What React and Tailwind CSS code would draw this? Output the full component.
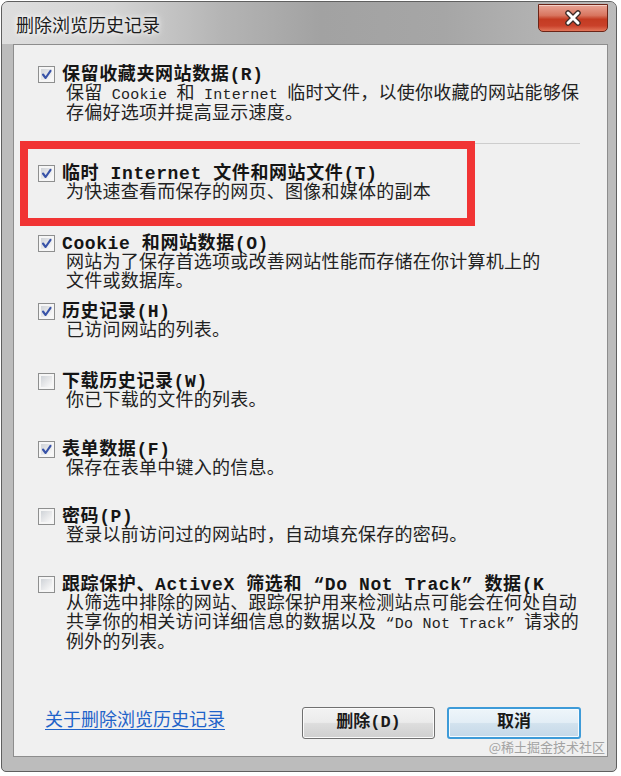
import React from "react";

const FONT = { fontFamily: '"Liberation Mono","Noto Sans CJK SC",monospace' };

function Check({ checked }) {
  return (
    <div className="w-[17px] h-[17px] shrink-0 mt-[1px] border border-[#8e8f8f] bg-[#f6f6f6] p-[2px]">
      <div className="w-full h-full relative bg-[linear-gradient(135deg,#cfd3d8_0%,#e6e7e9_50%,#fbfbfb_100%)]">
        {checked && (
          <svg width="15" height="15" viewBox="0 0 15 15" className="absolute -left-[2px] -top-[2px]">
            <path d="M4 7.5 L6.6 11 L11.5 3.8" fill="none" stroke="#3853a8" strokeWidth="2.1" strokeLinecap="round" strokeLinejoin="round" />
          </svg>
        )}
      </div>
    </div>
  );
}

function L({ children }) {
  return <span className="text-[15px]">{children}</span>;
}

function Item({ checked, title, lines }) {
  return (
    <div className="flex pl-[24px]">
      <Check checked={checked} />
      <div className="ml-[7px] text-[#151515]">
        <div className="text-[18px] leading-[20px] font-bold tracking-[0.6px] whitespace-nowrap">{title}</div>
        <div className="pl-[4px] text-[18px] leading-[19px] tracking-[0.25px] text-[#222222]">
          {lines.map((ln, i) => (
            <div key={i} className="whitespace-nowrap">{ln}</div>
          ))}
        </div>
      </div>
    </div>
  );
}

export default function App() {
  return (
    <div className="w-[621px] h-[776px] bg-white relative overflow-hidden" style={FONT}>
      <div className="ml-[1px] mt-[1px] w-[616px] h-[771px] rounded-t-[7px] rounded-b-[5px] border border-[#5f5f5f] bg-[#bcbcbc] flex flex-col">
        {/* title bar */}
        <div className="h-[42px] shrink-0 rounded-t-[6px] flex justify-between pl-[14px] pr-[8px] bg-[linear-gradient(90deg,#dedede_0%,#d4d4d4_18%,#b4b4b4_36%,#a2a2a2_52%,#a6a6a6_72%,#bcbcbc_100%)]">
          <div className="self-center mt-[2px] text-[18px] leading-[22px] text-[#1c1c1c] [text-shadow:0_0_8px_#ffffff,0_0_4px_#ffffff]" style={{ fontFamily: '"Noto Sans CJK SC",sans-serif' }}>
            删除浏览历史记录
          </div>
          <div className="mt-[2px] w-[70px] h-[28px] rounded-b-[5px] border border-[#6b2417] bg-[linear-gradient(180deg,#e9a596_0%,#d8755f_40%,#c43b22_55%,#c9412a_80%,#e3765a_100%)] flex items-center justify-center shadow-[inset_0_1px_0_rgba(255,255,255,0.5)]">
            <svg width="20" height="18" viewBox="0 0 20 18">
              <path d="M5 4 L15 14 M15 4 L5 14" stroke="#3d2a26" strokeWidth="5.5" strokeLinecap="round" />
              <path d="M5 4 L15 14 M15 4 L5 14" stroke="#ffffff" strokeWidth="3" strokeLinecap="round" />
            </svg>
          </div>
        </div>
        {/* body */}
        <div className="flex-1 pl-[11px] pr-[8px] pb-[14px]">
          <div className="h-full border border-[#8d8d8d] bg-[#f0f0f0] flex flex-col pt-[20px] pb-[17px]">
            <Item
              checked
              title="保留收藏夹网站数据(R)"
              lines={[
                <>保留<L> Cookie </L>和<L> Internet </L>临时文件，以使你收藏的网站能够保</>,
                "存偏好选项并提高显示速度。",
              ]}
            />
            <div className="mt-[19px] ml-[16px] mr-[27px] h-px bg-[#cdcdcd]" />
            <div className="relative mt-[20px]">
              <Item
                checked
                title="临时 Internet 文件和网站文件(T)"
                lines={["为快速查看而保存的网页、图像和媒体的副本"]}
              />
              <div className="absolute left-[6px] -top-[23px] w-[455px] h-[85px] border-[8px] border-[#f13434] pointer-events-none" />
            </div>
            <div className="mt-[31px]">
              <Item
                checked
                title="Cookie 和网站数据(O)"
                lines={["网站为了保存首选项或改善网站性能而存储在你计算机上的", "文件或数据库。"]}
              />
            </div>
            <div className="mt-[10px]">
              <Item checked title="历史记录(H)" lines={["已访问网站的列表。"]} />
            </div>
            <div className="mt-[31px]">
              <Item checked={false} title="下载历史记录(W)" lines={["你已下载的文件的列表。"]} />
            </div>
            <div className="mt-[29px]">
              <Item checked title="表单数据(F)" lines={["保存在表单中键入的信息。"]} />
            </div>
            <div className="mt-[28px]">
              <Item checked={false} title="密码(P)" lines={["登录以前访问过的网站时，自动填充保存的密码。"]} />
            </div>
            <div className="mt-[29px]">
              <Item
                checked={false}
                title="跟踪保护、ActiveX 筛选和 “Do Not Track” 数据(K"
                lines={[
                  "从筛选中排除的网站、跟踪保护用来检测站点可能会在何处自动",
                  <>共享你的相关访问详细信息的数据以及<L> “Do Not Track” </L>请求的</>,
                  "例外的列表。",
                ]}
              />
            </div>
            <div className="mt-auto flex items-center">
              <a className="ml-[31px] mb-[4px] text-[18px] leading-[22px] text-[#1f63c9] underline underline-offset-[3px]" href="#">
                关于删除浏览历史记录
              </a>
              <div className="ml-auto mr-[26px] flex gap-[12px]">
                <div className="w-[133px] h-[32px] rounded-[3px] border border-[#707070] bg-[linear-gradient(180deg,#f3f3f3_0%,#ebebeb_48%,#dddddd_52%,#cfcfcf_100%)] shadow-[inset_0_0_0_1px_#fbfbfb] flex items-center justify-center text-[17px] font-bold text-[#1a1a1a]">
                  删除(D)
                </div>
                <div className="w-[134px] h-[32px] rounded-[3px] border-2 border-[#3e9bd8] bg-[linear-gradient(180deg,#eef5fa_0%,#e3eef6_48%,#d2e2ee_52%,#c5d8e8_100%)] shadow-[inset_0_0_0_1px_#f4fbff] flex items-center justify-center text-[17px] font-bold text-[#1a1a1a]">
                  取消
                </div>
              </div>
            </div>
          </div>
        </div>
      </div>
      <div className="absolute right-[16px] top-[739px] text-[13px] leading-[16px] text-[#a3a3a3]" style={{ fontFamily: '"Noto Sans CJK SC",sans-serif' }}>
        @稀土掘金技术社区
      </div>
    </div>
  );
}
